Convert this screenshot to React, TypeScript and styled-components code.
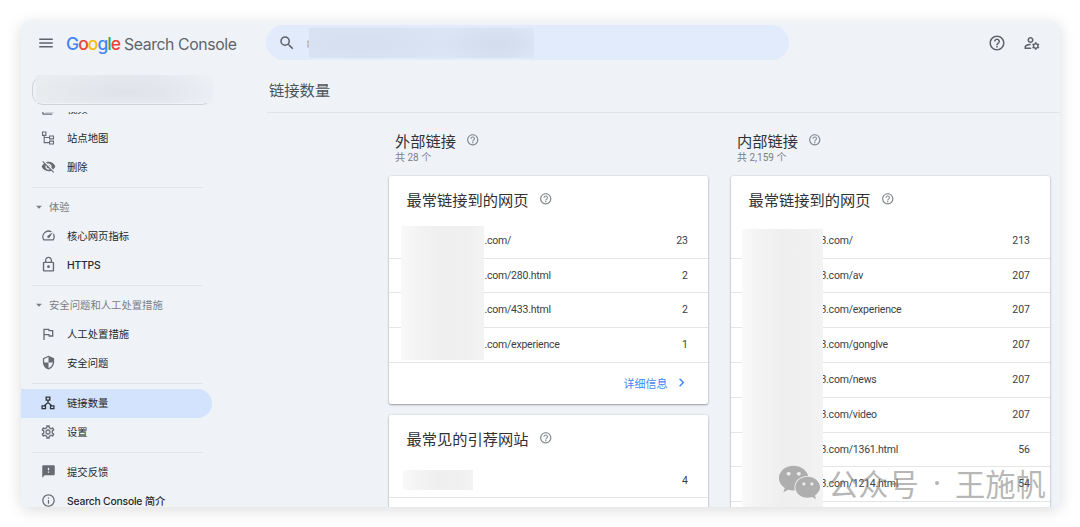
import React from "react";
import styled, { createGlobalStyle, css } from "styled-components";
import {
  MdMenu,
  MdSearch,
  MdHelpOutline,
  MdOutlineManageAccounts,
  MdVisibilityOff,
  MdOutlineSpeed,
  MdLockOutline,
  MdOutlineFlag,
  MdSecurity,
  MdOutlineSettings,
  MdFeedback,
  MdInfoOutline,
  MdArrowDropDown,
  MdChevronRight,
  MdOutlineVideoLibrary,
} from "react-icons/md";
import { FaWeixin } from "react-icons/fa";

const GlobalStyle = createGlobalStyle`
  * { box-sizing: border-box; }
  body {
    margin: 0;
    background: #fff;
    font-family: Roboto, "Noto Sans CJK SC", sans-serif;
    color: #3c4043;
    overflow: hidden;
  }
`;

const Page = styled.div`
  height: 527px;
  padding: 21px 20px 20px 21px;
`;

const Window = styled.div`
  position: relative;
  height: 486px;
  display: flex;
  flex-direction: column;
  overflow: hidden;
  background: #eff3f8;
  border-radius: 7px 7px 2px 2px;
`;

const Shadow = styled.div`
  border-radius: 7px;
  box-shadow: 0 3px 16px rgba(0, 0, 0, 0.14);
`;

const Header = styled.header`
  flex: none;
  height: 47px;
  display: flex;
  align-items: center;
  padding: 0 19px 4px 16px;
  color: #5f6368;
`;

const Brand = styled.div`
  display: flex;
  align-items: baseline;
  width: 211px;
  margin-left: 11px;
  padding-top: 2px;
  font-family: Inter, sans-serif;
  white-space: nowrap;
`;

const GoogleWord = styled.span`
  font-size: 17.5px;
  font-weight: 500;
  letter-spacing: -0.95px;
  width: 58px;
`;

const Letter = styled.span<{ $color: string }>`
  color: ${(p) => p.$color};
`;

const Product = styled.span`
  font-size: 15.8px;
  letter-spacing: -0.4px;
`;

const Search = styled.div`
  display: flex;
  align-items: center;
  width: 523px;
  height: 35px;
  margin-left: -11px;
  padding-left: 12px;
  border-radius: 18px;
  background: #e2ebfc;
`;

const TextSliver = styled.div`
  width: 2px;
  height: 9px;
  margin: 2px 0 0 11px;
  background: linear-gradient(#e2ebfc 10%, #b9b3ac 30%, #d8d3cc 55%, #b5b8c0 75%, #cfd6e2);
`;

const SearchRedacted = styled.div`
  width: 225px;
  height: 30px;
  background: radial-gradient(ellipse 60px 22px at 84% 55%, #d2dcec 0%, rgba(210, 220, 236, 0) 100%),
    radial-gradient(ellipse 90px 26px at 22% 50%, #d5dff0 0%, rgba(213, 223, 240, 0) 100%),
    linear-gradient(90deg, #dbe4f4 88%, #dfe8f8);
`;

const HeaderActions = styled.div`
  display: flex;
  gap: 17px;
  margin-left: auto;
`;

const Body = styled.div`
  flex: 1;
  min-height: 0;
  display: flex;
`;

const Sidebar = styled.aside`
  flex: none;
  width: 246px;
  display: flex;
  flex-direction: column;
`;

const Property = styled.div`
  flex: none;
  width: 181px;
  height: 29px;
  margin: 8px 0 7px 11px;
  padding-left: 3px;
  border: 1px solid #d0d3d6;
  border-radius: 11px;
`;

const PropertyRedacted = styled.div`
  width: 177px;
  height: 28px;
  margin-top: -2px;
  background: radial-gradient(ellipse 100px 22px at 50% 58%, #dfe3e9 0%, rgba(223, 227, 233, 0) 100%),
    linear-gradient(90deg, #eaecef, #e8ecf1 70%, #edf1f6);
`;

const Nav = styled.nav`
  flex: 1;
  min-height: 0;
  overflow: hidden;
`;

const NavList = styled.div`
  margin-top: -17px;
`;

const NavItem = styled.a<{ $active?: boolean; $latin?: boolean }>`
  display: flex;
  align-items: center;
  gap: 12px;
  width: 191px;
  height: 29px;
  padding: 0 0 2px 20px;
  border-radius: 0 15px 15px 0;
  font-family: Inter, "Noto Sans CJK SC", sans-serif;
  font-size: 10.35px;
  font-weight: ${(p) => (p.$latin ? 500 : 400)};
  letter-spacing: ${(p) => (p.$latin ? "-0.2px" : "0")};
  white-space: nowrap;
  color: #25282c;
  ${(p) =>
    p.$active &&
    css`
      background: #d3e3fd;
    `}
`;

const NavIcon = styled.span<{ $dark?: boolean }>`
  display: flex;
  justify-content: center;
  width: 14px;
  color: ${(p) => (p.$dark ? "#303337" : "#686b70")};
  svg {
    flex: none;
  }
`;

const Divider = styled.div`
  width: 171px;
  height: 1px;
  margin: 5px 0 5px 11px;
  background: #e2e5e8;
`;

const SectionLabel = styled.div`
  display: flex;
  align-items: center;
  gap: 3px;
  height: 29px;
  padding: 0 0 2px 11px;
  font-size: 10.35px;
  color: #797e83;
`;

const Main = styled.main`
  flex: 1;
  min-width: 0;
  display: flex;
  flex-direction: column;
`;

const PageTitle = styled.h1`
  flex: none;
  height: 45px;
  margin: 0;
  padding: 12px 0 0 2px;
  border-bottom: 1px solid #e2e6e9;
  font-size: 15.3px;
  line-height: 22px;
  font-weight: 400;
  color: #505357;
`;

const Columns = styled.div`
  display: flex;
  gap: 23px;
  padding: 17.5px 0 0 122.4px;
`;

const Column = styled.section`
  width: 319px;
  display: flex;
  flex-direction: column;
`;

const ColumnHead = styled.div`
  height: 45.1px;
  padding-left: 5.6px;
`;

const Heading = styled.h2`
  display: flex;
  gap: 10px;
  margin: 0;
  font-size: 15.25px;
  line-height: 22px;
  font-weight: 400;
  color: #303236;
  svg {
    margin-top: 2px;
    color: #80868b;
  }
`;

const Total = styled.div`
  margin-top: -0.6px;
  font-size: 10px;
  line-height: 12px;
  color: #7b8085;
`;

const Card = styled.div`
  position: relative;
  margin-bottom: 11.4px;
  background: #fff;
  border-radius: 2px;
  box-shadow: 0 1px 2px rgba(60, 64, 67, 0.45), 0 0 2px rgba(60, 64, 67, 0.18);
`;

const CardHead = styled.div`
  height: 48.2px;
  padding: 14px 0 0 17.2px;
`;

const Row = styled.div<{ $inset: number }>`
  display: flex;
  align-items: center;
  justify-content: space-between;
  height: 34.8px;
  padding: 0 20.4px 0.6px ${(p) => p.$inset}px;
  border-bottom: 1px solid #e4e5e7;
  font-size: 10.5px;
`;

const Path = styled.span`
  letter-spacing: -0.22px;
`;

const Mask = styled.div<{ $left: number; $top: number; $width: number; $height: number }>`
  position: absolute;
  left: ${(p) => p.$left}px;
  top: ${(p) => p.$top}px;
  width: ${(p) => p.$width}px;
  height: ${(p) => p.$height}px;
  background: linear-gradient(90deg, #f9f9f9, #f3f3f3 20%, #efefef 50%, #f0f0f0 80%, #f3f3f3);
`;

const More = styled.a`
  display: flex;
  align-items: center;
  justify-content: flex-end;
  gap: 6px;
  height: 41px;
  padding: 0 18px 1px 0;
  font-size: 11px;
  color: #4285f4;
`;

const Watermark = styled.div`
  position: absolute;
  left: 757px;
  top: 440px;
  display: flex;
  align-items: center;
  gap: 8px;
  font-family: "Noto Sans CJK SC", sans-serif;
  font-size: 30.3px;
  line-height: 44px;
  white-space: nowrap;
  color: rgba(120, 120, 120, 0.55);
  svg {
    margin-top: -2px;
  }
`;

const WatermarkName = styled.span`
  margin-left: -1px;
`;

const WatermarkDot = styled.span`
  width: 4px;
  height: 4px;
  margin: 0 8px 0 8px;
  border-radius: 50%;
  background: currentColor;
`;

const SitemapIcon = () => (
  <svg width="14" height="14" viewBox="0 0 14 14" fill="none" stroke="currentColor" strokeWidth="1.1">
    <path d="M1.500 1h3.400v3.400H1.500zM8.600 5h3.900v2.900H8.600zM8.600 10.100h3.900v2.900H8.600zM3.200 4.400v7.200h5.400M3.200 6.500h5.400" />
  </svg>
);

const LinksIcon = () => (
  <svg width="14" height="14" viewBox="0 0 14 14" fill="none" stroke="currentColor" strokeWidth="1.3">
    <path d="M5.200 1.200h3.600v2.900H5.200zM1.100 9.900h3.400v2.700H1.100zM9.500 9.900h3.400v2.700H9.500zM7 4.100v2.700M2.900 9.900L7 6.500l4.100 3.400" />
  </svg>
);

const Help = ({ size = 13.5 }: { size?: number }) => <MdHelpOutline size={size} />;

interface LinkRow {
  path: string;
  count: string;
}

const externalLinks: LinkRow[] = [
  { path: ".com/", count: "23" },
  { path: ".com/280.html", count: "2" },
  { path: ".com/433.html", count: "2" },
  { path: ".com/experience", count: "1" },
];

const internalLinks: LinkRow[] = [
  { path: "3.com/", count: "213" },
  { path: "3.com/av", count: "207" },
  { path: "3.com/experience", count: "207" },
  { path: "3.com/gonglve", count: "207" },
  { path: "3.com/news", count: "207" },
  { path: "3.com/video", count: "207" },
  { path: "3.com/1361.html", count: "56" },
  { path: "3.com/1214.html", count: "54" },
  { path: "", count: "" },
];

interface ItemProps {
  icon: React.ReactNode;
  label: string;
  active?: boolean;
  latin?: boolean;
}

const Item = ({ icon, label, active, latin }: ItemProps) => (
  <NavItem $active={active} $latin={latin}>
    <NavIcon $dark={active}>{icon}</NavIcon>
    {label}
  </NavItem>
);

const Section = ({ label }: { label: string }) => (
  <SectionLabel>
    <MdArrowDropDown size={14} />
    {label}
  </SectionLabel>
);

const CardTitle = ({ text }: { text: string }) => (
  <CardHead>
    <Heading>
      {text}
      <Help />
    </Heading>
  </CardHead>
);

const ColumnTitle = ({ text, total }: { text: string; total: string }) => (
  <ColumnHead>
    <Heading>
      {text}
      <Help />
    </Heading>
    <Total>{total}</Total>
  </ColumnHead>
);

const Rows = ({ rows, inset }: { rows: LinkRow[]; inset: number }) => (
  <>
    {rows.map((row, i) => (
      <Row key={i} $inset={inset}>
        <Path>{row.path}</Path>
        <span>{row.count}</span>
      </Row>
    ))}
  </>
);

const App = () => (
  <Page>
    <GlobalStyle />
    <Shadow>
      <Window>
        <Header>
          <MdMenu size={18} />
          <Brand>
            <GoogleWord>
              <Letter $color="#4285f4">G</Letter>
              <Letter $color="#ea4335">o</Letter>
              <Letter $color="#fbbc05">o</Letter>
              <Letter $color="#4285f4">g</Letter>
              <Letter $color="#34a853">l</Letter>
              <Letter $color="#ea4335">e</Letter>
            </GoogleWord>
            <Product>Search Console</Product>
          </Brand>
          <Search>
            <MdSearch size={18} />
            <TextSliver />
            <SearchRedacted />
          </Search>
          <HeaderActions>
            <Help size={18} />
            <MdOutlineManageAccounts size={18} />
          </HeaderActions>
        </Header>
        <Body>
          <Sidebar>
            <Property>
              <PropertyRedacted />
            </Property>
            <Nav>
              <NavList>
                <Item icon={<MdOutlineVideoLibrary size={15} />} label="视频" />
                <Item icon={<SitemapIcon />} label="站点地图" />
                <Item icon={<MdVisibilityOff size={15} />} label="删除" />
                <Divider />
                <Section label="体验" />
                <Item icon={<MdOutlineSpeed size={15} />} label="核心网页指标" />
                <Item icon={<MdLockOutline size={17} />} label="HTTPS" latin />
                <Divider />
                <Section label="安全问题和人工处置措施" />
                <Item icon={<MdOutlineFlag size={16} />} label="人工处置措施" />
                <Item icon={<MdSecurity size={15} />} label="安全问题" />
                <Divider />
                <Item icon={<LinksIcon />} label="链接数量" active />
                <Item icon={<MdOutlineSettings size={16} />} label="设置" />
                <Divider />
                <Item icon={<MdFeedback size={15} />} label="提交反馈" />
                <Item icon={<MdInfoOutline size={15} />} label="Search Console 简介" latin />
              </NavList>
            </Nav>
          </Sidebar>
          <Main>
            <PageTitle>链接数量</PageTitle>
            <Columns>
              <Column>
                <ColumnTitle text="外部链接" total="共 28 个" />
                <Card>
                  <CardTitle text="最常链接到的网页" />
                  <Rows rows={externalLinks} inset={95} />
                  <More>
                    详细信息
                    <MdChevronRight size={17} />
                  </More>
                  <Mask $left={12} $top={50} $width={83} $height={134} />
                </Card>
                <Card>
                  <CardTitle text="最常见的引荐网站" />
                  <Rows rows={[{ path: "", count: "4" }, { path: "", count: "" }]} inset={95} />
                  <Mask $left={14} $top={55} $width={70} $height={20} />
                </Card>
              </Column>
              <Column>
                <ColumnTitle text="内部链接" total="共 2,159 个" />
                <Card>
                  <CardTitle text="最常链接到的网页" />
                  <Rows rows={internalLinks} inset={89} />
                  <Mask $left={11} $top={53} $width={81} $height={300} />
                </Card>
              </Column>
            </Columns>
          </Main>
        </Body>
        <Watermark>
          <FaWeixin size={43} />
          <WatermarkName>公众号</WatermarkName>
          <WatermarkDot />
          王施帆
        </Watermark>
      </Window>
    </Shadow>
  </Page>
);

export default App;
